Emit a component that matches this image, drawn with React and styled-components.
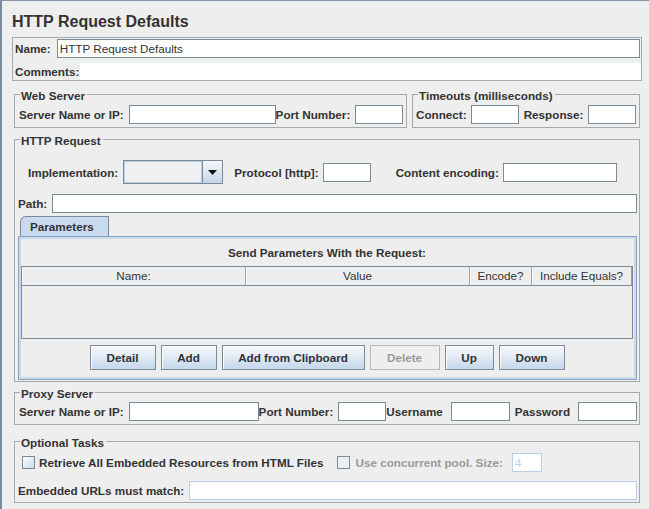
import styled, { createGlobalStyle } from "styled-components";

// Global

const GlobalStyle = createGlobalStyle`
  html, body {
    margin: 0;
    padding: 0;
    background: #eeeeee;
  }
  body {
    font-family: "Liberation Sans", Arial, sans-serif;
    color: #333333;
  }
`;

const columns = [
  { title: "Name:", width: "224px" },
  { title: "Value", width: "224px" },
  { title: "Encode?", width: "62px" },
  { title: "Include Equals?", width: "1fr" },
];

const buttons = [
  { label: "Detail", w: 66 },
  { label: "Add", w: 56 },
  { label: "Add from Clipboard", w: 143 },
  { label: "Delete", w: 70, disabled: true },
  { label: "Up", w: 49 },
  { label: "Down", w: 66 },
];

// Component

function App() {
  return (
    <Page>
      <GlobalStyle />
      <Title>HTTP Request Defaults</Title>

      <NamePanel>
        <NameRow>
          <Label>Name:</Label>
          <Input $ml={6} $mr={1} defaultValue="HTTP Request Defaults" />
        </NameRow>
        <CommentsRow>
          <Label>Comments:</Label>
          <CommentsInput />
        </CommentsRow>
      </NamePanel>

      <Sections>
        <TopRow>
          <Group $w={393}>
            <Legend>Web Server</Legend>
            <Body $pt={2} $pb={3} $pl={4}>
              <Row>
                <Label>Server Name or IP:</Label>
                <Input $w={147} $ml={5} />
                <Label>Port Number:</Label>
                <Input $w={48} $ml={5} />
              </Row>
            </Body>
          </Group>
          <Group $w={228}>
            <Legend>Timeouts (milliseconds)</Legend>
            <Body $pt={2} $pb={3} $pl={3}>
              <Row>
                <Label>Connect:</Label>
                <Input $w={48} $ml={4} />
                <Label $ml={5}>Response:</Label>
                <Input $w={48} $ml={5} />
              </Row>
            </Body>
          </Group>
        </TopRow>

        <Group $mt={2}>
          <Legend>HTTP Request</Legend>
          <Body $pt={12} $pb={1} $pl={3}>
            <Row $h={24} $ml={10}>
              <Label>Implementation:</Label>
              <Combo>
                <ComboField />
                <ComboButton>
                  <svg width="9" height="5" viewBox="0 0 9 5">
                    <path d="M0 0h9L4.5 5z" fill="#111" />
                  </svg>
                </ComboButton>
              </Combo>
              <Label $ml={11}>Protocol [http]:</Label>
              <Input $w={48} $ml={4} />
              <Label $ml={25}>Content encoding:</Label>
              <Input $w={114} $ml={4} />
            </Row>
            <Row $mt={10}>
              <Label>Path:</Label>
              <Input $ml={5} />
            </Row>

            <TabStrip>
              <Tab>Parameters</Tab>
            </TabStrip>
            <TabPanel>
              <PanelTitle>Send Parameters With the Request:</PanelTitle>
              <Table>
                <HeaderRow>
                  {columns.map((c) => (
                    <HeaderCell key={c.title}>{c.title}</HeaderCell>
                  ))}
                </HeaderRow>
                <TableBody />
              </Table>
              <ButtonRow>
                {buttons.map((b) => (
                  <Button key={b.label} $w={b.w} disabled={b.disabled}>
                    {b.label}
                  </Button>
                ))}
              </ButtonRow>
            </TabPanel>
          </Body>
        </Group>

        <Group $mt={1}>
          <Legend>Proxy Server</Legend>
          <Body $pt={1} $pb={3} $pl={4}>
            <Row>
              <Label>Server Name or IP:</Label>
              <Input $w={130} $ml={5} />
              <Label>Port Number:</Label>
              <Input $w={48} $ml={5} />
              <Label>Username</Label>
              <Input $w={59} $ml={8} />
              <Label $ml={5}>Password</Label>
              <Input $w={59} $ml={8} />
            </Row>
          </Body>
        </Group>

        <Group $mt={7}>
          <Legend>Optional Tasks</Legend>
          <Body $pt={3} $pb={2} $pl={3}>
            <Row $ml={4}>
              <Check />
              <Label $ml={4}>Retrieve All Embedded Resources from HTML Files</Label>
              <Check $disabled $ml={14} />
              <Label $ml={5} $disabled>
                Use concurrent pool. Size:
              </Label>
              <Input $w={30} $ml={9} $soft disabled defaultValue="4" />
            </Row>
            <Row $mt={9}>
              <Label>Embedded URLs must match:</Label>
              <Input $ml={5} $soft />
            </Row>
          </Body>
        </Group>
      </Sections>
    </Page>
  );
}

export default App;

// Style

const Page = styled.div`
  width: 649px;
  height: 509px;
  box-sizing: border-box;
  overflow: hidden;
  border-left: 2px solid #7b8c9f;
  border-top: 1px solid #8595a7;
  padding: 11px 7px 0 10px;
  background: #eeeeee;
`;

const Title = styled.h1`
  margin: 0 0 5px 0;
  font-size: 16px;
  line-height: 20px;
  font-weight: bold;
  color: #333333;
`;

const NamePanel = styled.div`
  display: flex;
  flex-direction: column;
  gap: 5px;
  border: 1px solid #a8a8a8;
  padding: 1px 0 0 2px;
`;

const NameRow = styled.div`
  display: flex;
  align-items: center;
  height: 19px;
`;

const CommentsRow = styled.div`
  display: flex;
  align-items: center;
  height: 17px;
`;

const CommentsInput = styled.div`
  flex: 1;
  align-self: stretch;
  background: #ffffff;
  margin-left: 1px;
`;

const Sections = styled.div`
  margin: 0 2px;
`;

const TopRow = styled.div`
  display: flex;
  gap: 5px;
  margin-top: 4px;
`;

const Group = styled.fieldset`
  margin: ${(p) => p.$mt || 0}px 0 0 0;
  padding: 0;
  min-width: 0;
  box-sizing: border-box;
  width: ${(p) => (p.$w ? `${p.$w}px` : "auto")};
  border: 1px solid #a8a8a8;
`;

const Legend = styled.legend`
  margin-left: 5px;
  padding: 4px 2px 0 1px;
  font-size: 11.7px;
  line-height: 14px;
  font-weight: bold;
  color: #333333;
`;

const Body = styled.div`
  display: flex;
  flex-direction: column;
  padding: ${(p) => p.$pt}px 2px ${(p) => p.$pb}px ${(p) => p.$pl}px;
`;

const Row = styled.div`
  display: flex;
  align-items: center;
  height: ${(p) => p.$h || 19}px;
  margin-top: ${(p) => p.$mt || 0}px;
  margin-left: ${(p) => p.$ml || 0}px;
`;

const Label = styled.span`
  font-size: 11.7px;
  font-weight: bold;
  white-space: nowrap;
  margin-left: ${(p) => p.$ml || 0}px;
  color: ${(p) => (p.$disabled ? "#9a9a9a" : "#333333")};
`;

const Input = styled.input`
  box-sizing: border-box;
  height: 19px;
  ${(p) => (p.$w ? `width: ${p.$w}px; flex: none;` : "flex: 1; min-width: 0;")}
  margin: 0 ${(p) => p.$mr || 0}px 0 ${(p) => p.$ml || 0}px;
  padding: 0 2px;
  border: 1px solid ${(p) => (p.$soft ? "#b8cfe5" : "#7a8a99")};
  border-radius: 0;
  background: #ffffff;
  font-family: "Liberation Sans", Arial, sans-serif;
  font-size: 11.7px;
  color: #333333;
  outline: none;

  &:disabled {
    color: #b8cfe5;
    background: #ffffff;
  }
`;

const Combo = styled.div`
  display: flex;
  box-sizing: border-box;
  width: 100px;
  height: 24px;
  margin-left: 5px;
  border: 1px solid #7a8a99;
`;

const ComboField = styled.div`
  flex: 1;
  background: #eef0f2;
  box-shadow: inset 0 0 0 1px #b8cfe5;
`;

const ComboButton = styled.div`
  display: flex;
  align-items: center;
  justify-content: center;
  width: 19px;
  border-left: 1px solid #7a8a99;
  background: linear-gradient(#f4f7fa, #dbe6f1 55%, #c2d5e9);
`;

const TabStrip = styled.div`
  display: flex;
  margin: 3px 0 0 2px;
`;

const Tab = styled.div`
  box-sizing: border-box;
  width: 89px;
  height: 20px;
  padding-left: 9px;
  border: 1px solid #7a8a99;
  border-bottom: none;
  border-top-left-radius: 6px;
  background: #c8daef;
  font-size: 11.7px;
  font-weight: bold;
  line-height: 19px;
  color: #333333;
`;

const TabPanel = styled.div`
  display: flex;
  flex-direction: column;
  box-sizing: border-box;
  height: 144px;
  padding: 9px 3px 0 2px;
  border: 1px solid #8fa3b8;
  box-shadow: inset 0 0 0 2px #c8daef;
`;

const PanelTitle = styled.div`
  text-align: center;
  font-size: 11.7px;
  font-weight: bold;
  line-height: 14px;
  color: #333333;
`;

const Table = styled.div`
  margin-top: 6px;
  border: 1px solid #7a8a99;
  background: #eeeeee;
`;

const HeaderRow = styled.div`
  display: grid;
  grid-template-columns: ${columns.map((c) => c.width).join(" ")};
  height: 18px;
  border-bottom: 1px solid #7a8a99;
`;

const HeaderCell = styled.div`
  border-right: 1px solid #a0a0a0;
  box-shadow: inset 1px 0 0 #ffffff;
  text-align: center;
  font-size: 11.7px;
  line-height: 18px;
  color: #333333;
  white-space: nowrap;
  overflow: hidden;
`;

const TableBody = styled.div`
  height: 52px;
  background: #eeeeee;
`;

const ButtonRow = styled.div`
  display: flex;
  justify-content: center;
  gap: 5px;
  margin-top: 6px;
`;

const Button = styled.button`
  box-sizing: border-box;
  width: ${(p) => p.$w}px;
  height: 25px;
  padding: 0;
  border: 1px solid #7a8a99;
  border-radius: 0;
  background: linear-gradient(#f6f9fc, #e2ebf5 45%, #c4d7eb);
  box-shadow: inset 1px 1px 0 #ffffff;
  font-family: "Liberation Sans", Arial, sans-serif;
  font-size: 11.7px;
  font-weight: bold;
  color: #333333;

  &:disabled {
    border-color: #b8b8b8;
    background: #eeeeee;
    box-shadow: none;
    color: #9a9a9a;
  }
`;

const Check = styled.span`
  box-sizing: border-box;
  flex: none;
  width: 13px;
  height: 13px;
  margin-left: ${(p) => p.$ml || 0}px;
  border: 1px solid #7a8a99;
  background: ${(p) =>
    p.$disabled ? "#eeeeee" : "linear-gradient(135deg, #ffffff, #c8daef)"};
`;
